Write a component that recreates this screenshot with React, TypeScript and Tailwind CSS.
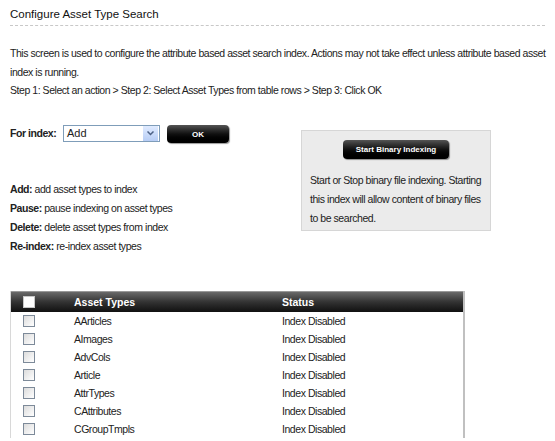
import React from 'react';

const assetTypes = ['AArticles', 'AImages', 'AdvCols', 'Article', 'AttrTypes', 'CAttributes', 'CGroupTmpls'];

const legend = [
  { key: 'Add:', text: 'add asset types to index' },
  { key: 'Pause:', text: 'pause indexing on asset types' },
  { key: 'Delete:', text: 'delete asset types from index' },
  { key: 'Re-index:', text: 're-index asset types' },
];

function Box({ dark }: { dark?: boolean }) {
  return (
    <span
      className={`inline-block w-[12px] h-[12px] border ${
        dark ? 'border-[#c8c8c8] bg-white' : 'border-[#7d8a99] bg-gradient-to-br from-[#dcdcdc] to-white'
      }`}
    />
  );
}

function BlackButton({ label, className }: { label: string; className?: string }) {
  return (
    <button
      type="button"
      className={`whitespace-nowrap tracking-normal rounded-[4px] bg-gradient-to-b from-[#555] via-[#111] to-black text-white font-bold shadow-[1px_1px_1px_rgba(0,0,0,0.4)] ${className ?? ''}`}
    >
      {label}
    </button>
  );
}

export default function App() {
  return (
    <div className="w-[555px] h-[441px] overflow-hidden bg-white text-[#222] text-[10.5px] tracking-[-0.45px] leading-[19px] font-['Liberation_Sans',Arial,sans-serif] pl-[10px] pr-[10px]">
      {/* Title */}
      <div className="pt-[6px] text-[11.5px] tracking-normal leading-[16px] text-[#111]">Configure Asset Type Search</div>
      <div className="mt-[3px] border-t border-dashed border-[#c8c8c8]" />

      {/* Intro */}
      <div className="mt-[18px] whitespace-nowrap">
        <p>
          This screen is used to configure the attribute based asset search index. Actions may not take effect unless attribute based asset
          <br />
          index is running.
        </p>
        <p className="leading-[17px]">Step 1: Select an action &gt; Step 2: Select Asset Types from table rows &gt; Step 3: Click OK</p>
      </div>

      {/* Actions */}
      <div className="mt-[25px] flex">
        <div className="w-[291px]">
          <div className="flex items-center h-[19px]">
            <span className="font-bold w-[53px]">For index:</span>
            <div className="w-[97px] h-[17px] border border-[#7f9db9] bg-white flex items-center justify-between">
              <span className="pl-[3px] text-[11px] tracking-normal">Add</span>
              <span className="w-[15px] h-[15px] mr-px bg-gradient-to-b from-[#e0ebff] to-[#b7cdf5] flex items-center justify-center">
                <svg width="7" height="5" viewBox="0 0 7 5">
                  <path d="M0.5 0.5 L3.5 3.5 L6.5 0.5" stroke="#4d6185" strokeWidth="1.5" fill="none" />
                </svg>
              </span>
            </div>
            <BlackButton label="OK" className="ml-[7px] w-[62px] h-[18px] text-[8px]" />
          </div>
          <div className="mt-[37px]">
            {legend.map((l) => (
              <div key={l.key}>
                <span className="font-bold">{l.key}</span> {l.text}
              </div>
            ))}
          </div>
        </div>
        <div className="mt-[6px] w-[190px] h-[101px] bg-[#ebebeb] border border-[#d6d6d6] flex flex-col">
          <div className="flex justify-center pt-[9px]">
            <BlackButton label="Start Binary Indexing" className="w-[106px] h-[19px] text-[8px]" />
          </div>
          <p className="pl-[8px] pt-[12px] whitespace-nowrap">
            Start or Stop binary file indexing. Starting
            <br />
            this index will allow content of binary files
            <br />
            to be searched.
          </p>
        </div>
      </div>

      {/* Table */}
      <div className="mt-[35px] w-[455px] border-r-2 border-[#c0c0c0] border-l border-l-[#d8d8d8]">
        <div className="flex items-center h-[21px] bg-gradient-to-b from-[#6a6a6a] via-[#333] to-[#111] border-t border-[#999] text-white font-bold text-[10.5px] tracking-normal">
          <span className="w-[63px] pl-[12px] flex items-center">
            <Box dark />
          </span>
          <span className="w-[208px]">Asset Types</span>
          <span>Status</span>
        </div>
        {assetTypes.map((t) => (
          <div key={t} className="flex items-center h-[18px]">
            <span className="w-[63px] pl-[12px] flex items-center">
              <Box />
            </span>
            <span className="w-[208px]">{t}</span>
            <span>Index Disabled</span>
          </div>
        ))}
      </div>
    </div>
  );
}
